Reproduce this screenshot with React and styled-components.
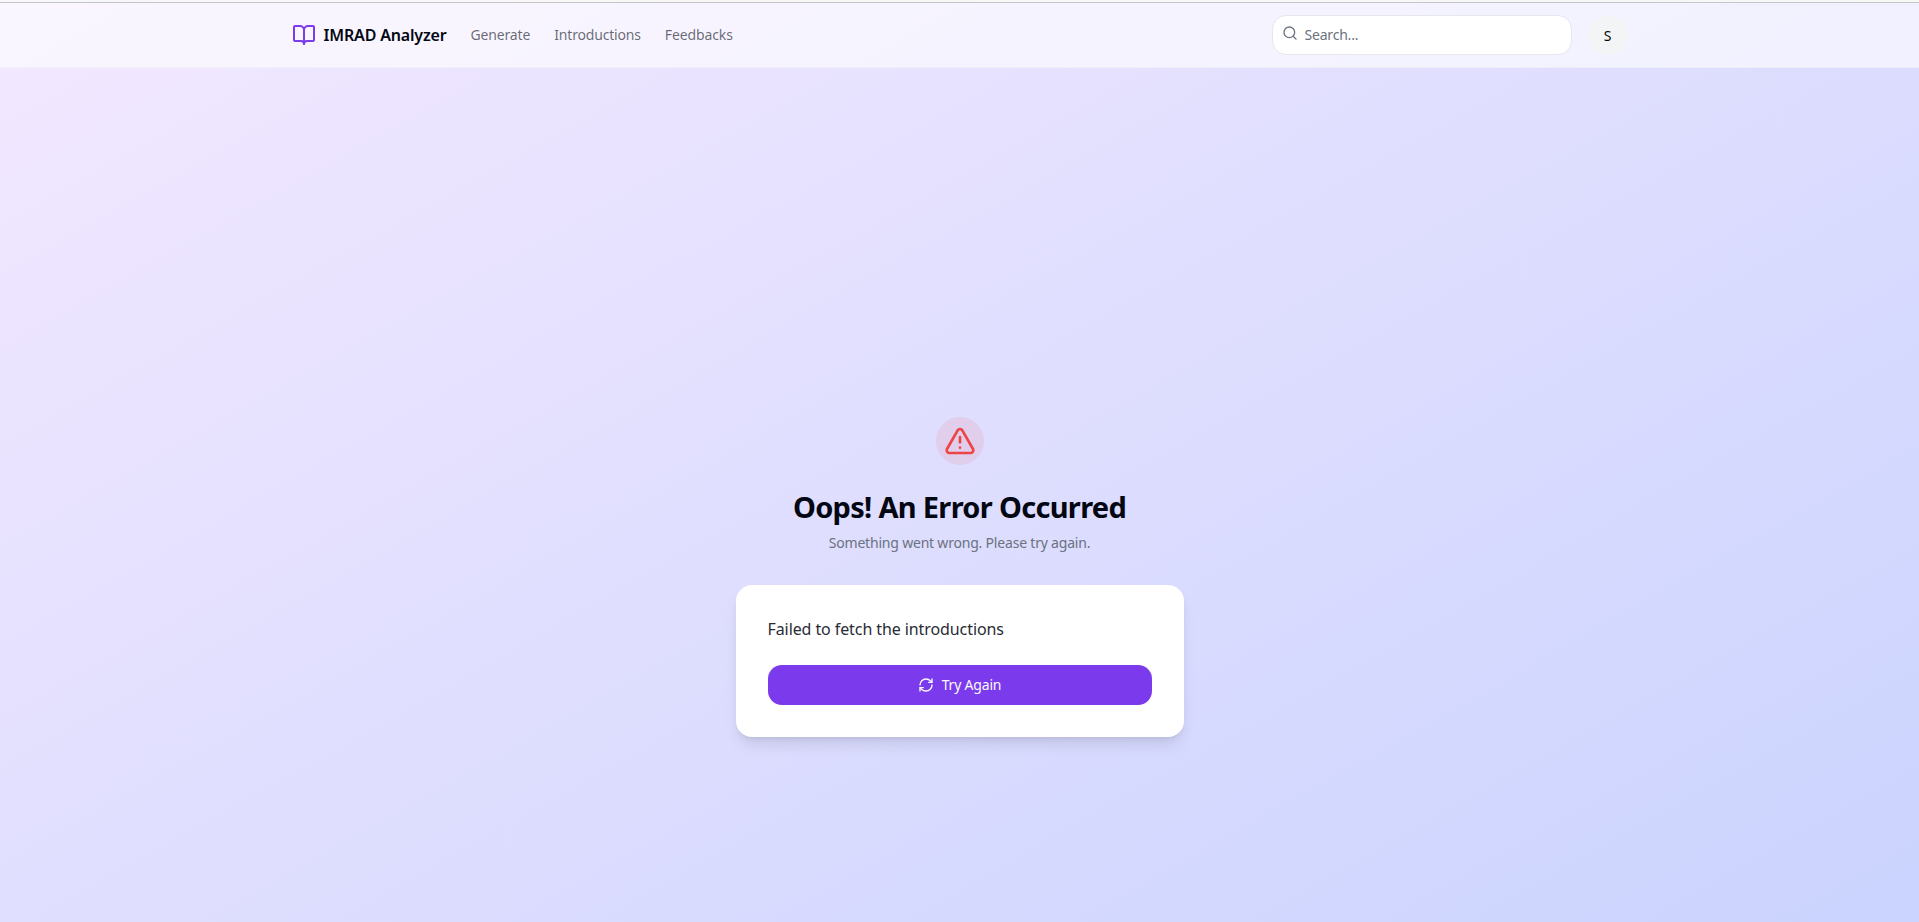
import React from 'react';
import styled, { createGlobalStyle } from 'styled-components';
import { BookOpen, Search, TriangleAlert, RefreshCw } from 'lucide-react';

const GlobalStyle = createGlobalStyle`
  *, *::before, *::after { box-sizing: border-box; }
  body {
    margin: 0;
    overflow: hidden;
    color: #030712;
    font-family: 'Noto Sans', sans-serif;
  }
`;

const Page = styled.div`
  height: 100vh;
  overflow: hidden;
  border-top: 2px solid #f7f7f7;
`;

const Shell = styled.div`
  height: 1084px;
  display: flex;
  flex-direction: column;
  border-top: 1px solid #c6c6c6;
  background: linear-gradient(to bottom right, #f3e8ff, #c7d2fe);
`;

const Header = styled.header`
  height: 65px;
  flex-shrink: 0;
  background: rgba(255, 255, 255, 0.6);
  border-bottom: 1px solid rgba(229, 231, 235, 0.4);
`;

const HeaderInner = styled.div`
  max-width: 1400px;
  height: 64px;
  margin: 0 auto;
  padding: 0 32px;
  display: flex;
  align-items: center;
  justify-content: space-between;
`;

const HeaderGroup = styled.div`
  display: flex;
  align-items: center;
  gap: ${({ $gap }) => $gap}px;
`;

const Brand = styled.a`
  display: flex;
  align-items: center;
  gap: 8px;
  font-size: 16px;
  font-weight: 600;
  line-height: 24px;
  letter-spacing: -0.17px;
  white-space: nowrap;

  svg { color: #7c3aed; }
`;

const NavLink = styled.a`
  font-size: 14px;
  line-height: 20px;
  letter-spacing: ${({ $tracking }) => $tracking}px;
  color: rgba(3, 7, 18, 0.6);
`;

const SearchBox = styled.label`
  width: 300px;
  height: 40px;
  padding: 0 12px 0 9px;
  display: flex;
  align-items: center;
  gap: 7px;
  border: 1px solid #e5e7eb;
  border-radius: 14px;
  background: #fff;

  svg { flex-shrink: 0; margin-bottom: 4px; color: #6b7280; }
`;

const SearchInput = styled.input`
  flex: 1;
  min-width: 0;
  padding: 0;
  border: 0;
  outline: 0;
  background: transparent;
  font: 14px/20px 'Noto Sans', sans-serif;
  letter-spacing: -0.2px;

  &::placeholder { color: #6b7280; opacity: 1; }
`;

const Avatar = styled.div`
  width: 40px;
  height: 40px;
  display: grid;
  place-items: center;
  border-radius: 50%;
  background: #f3f4f6;
  font-size: 14px;
`;

const Main = styled.main`
  flex: 1;
  display: flex;
  flex-direction: column;
  align-items: center;
  justify-content: center;
`;

const AlertBadge = styled.div`
  width: 48px;
  height: 48px;
  display: grid;
  place-items: center;
  border-radius: 50%;
  background: rgba(239, 68, 68, 0.1);
  color: #ef4444;
`;

const Title = styled.h1`
  margin: 24px 0 8px;
  font-size: 29px;
  font-weight: 700;
  line-height: 36px;
  letter-spacing: -0.69px;
`;

const Subtitle = styled.p`
  margin: 0 0 32px;
  font-size: 14px;
  line-height: 20px;
  letter-spacing: -0.2px;
  color: #6b7280;
`;

const Card = styled.section`
  width: 448px;
  padding: 32px;
  border-radius: 16px;
  background: #fff;
  box-shadow: 0 10px 15px -3px rgba(0, 0, 0, 0.1), 0 4px 6px -4px rgba(0, 0, 0, 0.1);
`;

const Message = styled.p`
  margin: 0 0 24px;
  font-size: 16px;
  line-height: 24px;
  letter-spacing: -0.09px;
  color: #292c35;
`;

const RetryButton = styled.button`
  width: 100%;
  height: 40px;
  padding: 0;
  display: flex;
  align-items: center;
  justify-content: center;
  gap: 8px;
  border: 0;
  border-radius: 14px;
  background: #7c3aed;
  color: #f9fafb;
  font: 14px/20px 'Noto Sans', sans-serif;
  letter-spacing: -0.2px;
`;

export default function App() {
  return (
    <>
      <GlobalStyle />
      <Page>
        <Shell>
          <Header>
            <HeaderInner>
              <HeaderGroup $gap={24}>
                <Brand>
                  <BookOpen size={24} />
                  IMRAD Analyzer
                </Brand>
                <NavLink $tracking={-0.15}>Generate</NavLink>
                <NavLink $tracking={-0.18}>Introductions</NavLink>
                <NavLink $tracking={-0.12}>Feedbacks</NavLink>
              </HeaderGroup>
              <HeaderGroup $gap={16}>
                <SearchBox>
                  <Search size={16} />
                  <SearchInput placeholder="Search..." />
                </SearchBox>
                <Avatar>S</Avatar>
              </HeaderGroup>
            </HeaderInner>
          </Header>
          <Main>
            <AlertBadge>
              <TriangleAlert size={32} />
            </AlertBadge>
            <Title>Oops! An Error Occurred</Title>
            <Subtitle>Something went wrong. Please try again.</Subtitle>
            <Card>
              <Message>Failed to fetch the introductions</Message>
              <RetryButton>
                <RefreshCw size={16} />
                Try Again
              </RetryButton>
            </Card>
          </Main>
        </Shell>
      </Page>
    </>
  );
}
